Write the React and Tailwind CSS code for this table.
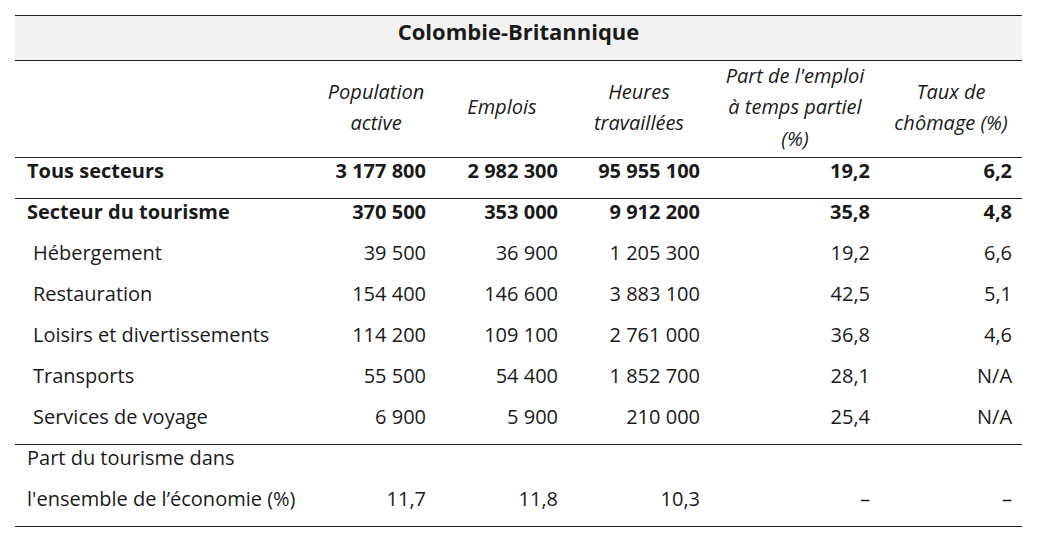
import React from "react";

const rows = [
  { label: "Hébergement", v: ["39 500", "36 900", "1 205 300", "19,2", "6,6"] },
  { label: "Restauration", v: ["154 400", "146 600", "3 883 100", "42,5", "5,1"] },
  { label: "Loisirs et divertissements", v: ["114 200", "109 100", "2 761 000", "36,8", "4,6"] },
  { label: "Transports", v: ["55 500", "54 400", "1 852 700", "28,1", "N/A"] },
  { label: "Services de voyage", v: ["6 900", "5 900", "210 000", "25,4", "N/A"] },
];

const headers = [
  ["Population", "active"],
  ["Emplois"],
  ["Heures", "travaillées"],
  ["Part de l'emploi", "à temps partiel", "(%)"],
  ["Taux de", "chômage (%)"],
];

const Num = ({ children }) => (
  <td className="h-[41px] align-top pr-[10px] text-right leading-[25px] whitespace-nowrap">
    {children}
  </td>
);

const Label = ({ children, indent }) => (
  <td className={`h-[41px] align-top text-left leading-[25px] whitespace-nowrap ${indent ? "pl-[18px]" : "pl-[12px]"}`}>
    {children}
  </td>
);

export default function App() {
  return (
    <div className="w-[1037px] h-[538px] bg-white pt-[15px] px-[15px] text-[20px] text-[#1a1a1a]" style={{ fontFamily: '"Open Sans", "Noto Sans", sans-serif' }}>
      <table className="w-[1007px] border-collapse table-fixed">
        <colgroup>
          <col className="w-[301px]" />
          <col className="w-[120px]" />
          <col className="w-[132px]" />
          <col className="w-[142px]" />
          <col className="w-[170px]" />
          <col className="w-[142px]" />
        </colgroup>
        <thead>
          <tr className="bg-[#f2f2f2] border-y border-[#222]">
            <th colSpan={6} className="h-[45px] text-center font-bold text-[22px] leading-[30px] align-top pt-0">
              Colombie-Britannique
            </th>
          </tr>
          <tr className="border-b border-[#222]">
            <th className="h-[97px] p-0"></th>
            {headers.map((h, i) => (
              <th key={i} className="h-[97px] p-0 font-normal italic text-center align-middle leading-[31.5px]">
                <div className="-mt-[4px]">
                  {h.map((line, j) => (
                    <div key={j}>{line}</div>
                  ))}
                </div>
              </th>
            ))}
          </tr>
        </thead>
        <tbody>
          <tr className="border-b border-[#222] font-bold">
            <Label>Tous secteurs</Label>
            <Num>3 177 800</Num>
            <Num>2 982 300</Num>
            <Num>95 955 100</Num>
            <Num>19,2</Num>
            <Num>6,2</Num>
          </tr>
          <tr className="font-bold">
            <Label>Secteur du tourisme</Label>
            <Num>370 500</Num>
            <Num>353 000</Num>
            <Num>9 912 200</Num>
            <Num>35,8</Num>
            <Num>4,8</Num>
          </tr>
          {rows.map((r, i) => (
            <tr key={r.label} className={i === rows.length - 1 ? "border-b border-[#222]" : ""}>
              <Label indent>{r.label}</Label>
              {r.v.map((v, j) => (
                <Num key={j}>{v}</Num>
              ))}
            </tr>
          ))}
          <tr>
            <Label>Part du tourisme dans</Label>
            <Num />
            <Num />
            <Num />
            <Num />
            <Num />
          </tr>
          <tr className="border-b border-[#222]">
            <Label>l'ensemble de l’économie (%)</Label>
            <Num>11,7</Num>
            <Num>11,8</Num>
            <Num>10,3</Num>
            <Num>–</Num>
            <Num>–</Num>
          </tr>
        </tbody>
      </table>
    </div>
  );
}
